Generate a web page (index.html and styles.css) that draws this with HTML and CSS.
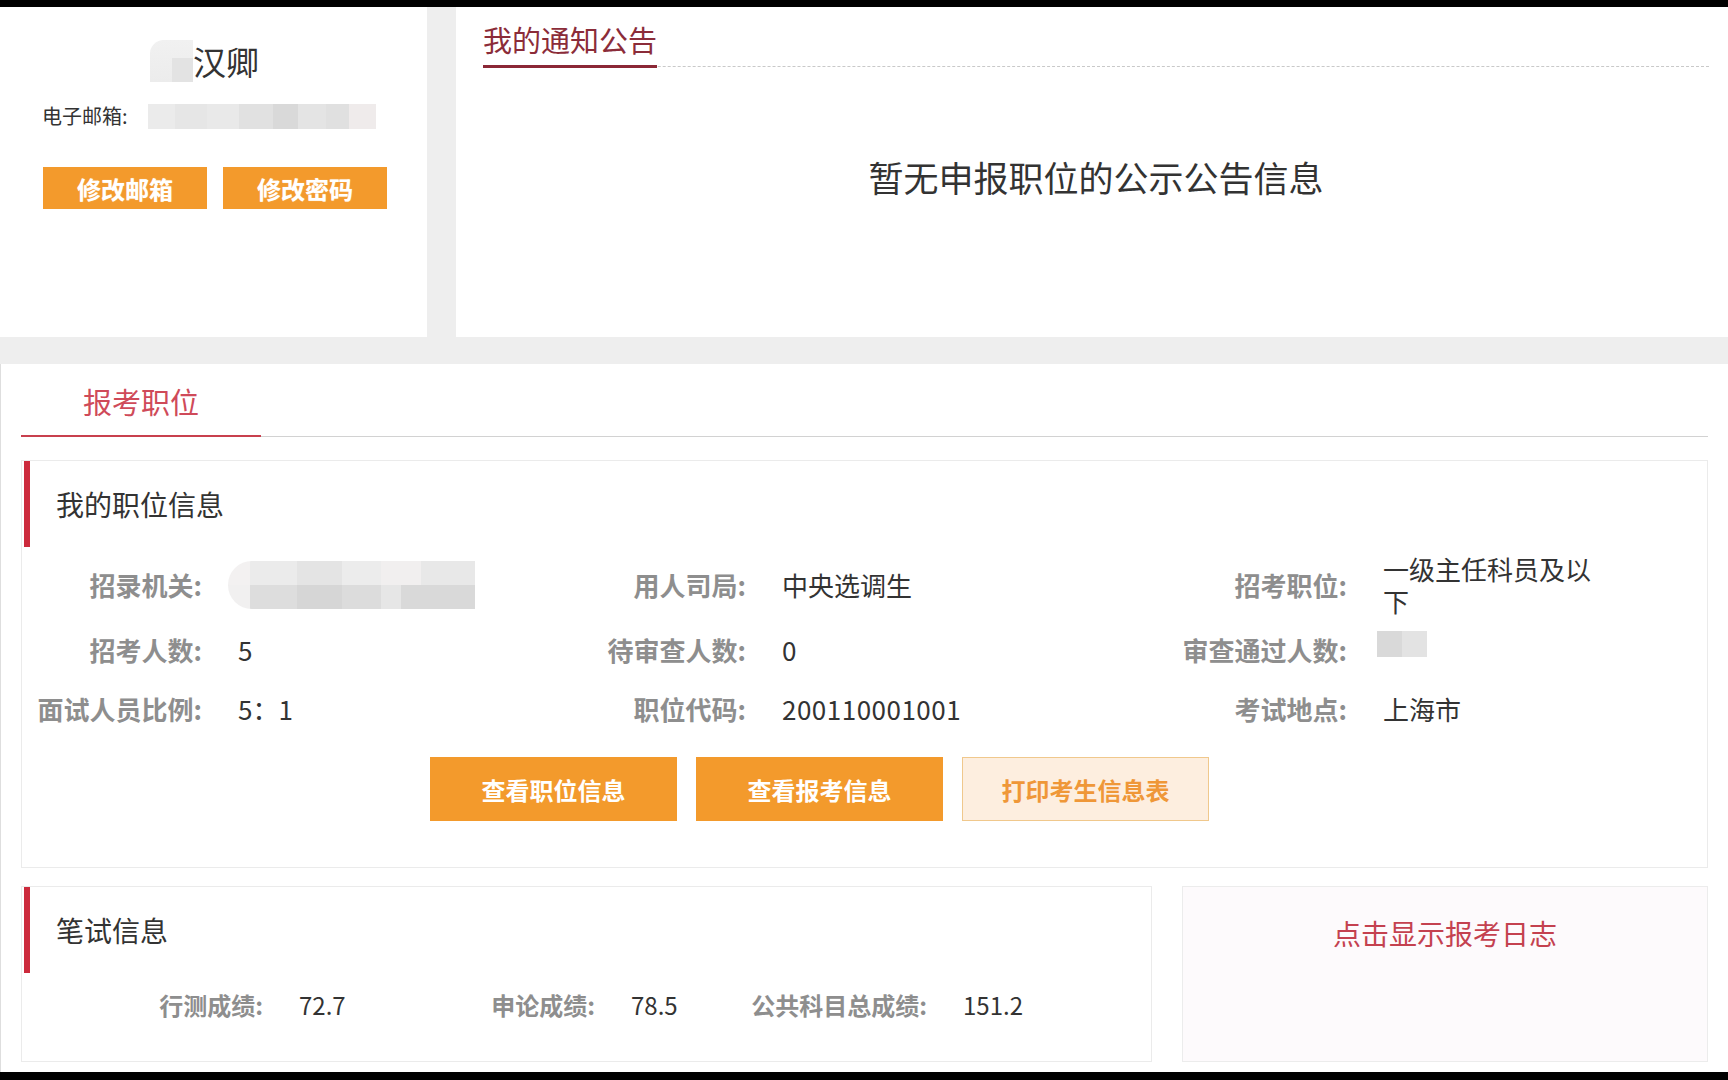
FILE: index.html
```html
<!DOCTYPE html>
<html lang="zh-CN">
<head>
<meta charset="utf-8">
<title>报考职位</title>
<link rel="stylesheet" href="styles.css">
</head>
<body>
<div class="screen">
  <div class="page">
    <div class="top">
      <section class="user">
        <div class="name"><span class="blur-name"></span><span class="name-text">汉卿</span></div>
        <div class="email"><span class="email-label">电子邮箱:</span><span class="blur-email"></span></div>
        <div class="user-btns">
          <button class="btn-small">修改邮箱</button>
          <button class="btn-small">修改密码</button>
        </div>
      </section>
      <section class="notice">
        <div class="notice-head"><span class="notice-title">我的通知公告</span></div>
        <p class="notice-empty">暂无申报职位的公示公告信息</p>
      </section>
    </div>

    <main class="main">
      <div class="tabs"><span class="tab">报考职位</span></div>

      <section class="card pos-card">
        <div class="card-head">我的职位信息</div>
        <div class="info-grid">
          <div class="lbl">招录机关:</div>
          <div class="val"><span class="blur-org"></span></div>
          <div class="lbl">用人司局:</div>
          <div class="val">中央选调生</div>
          <div class="lbl">招考职位:</div>
          <div class="val">一级主任科员及以下</div>

          <div class="lbl">招考人数:</div>
          <div class="val">5</div>
          <div class="lbl">待审查人数:</div>
          <div class="val">0</div>
          <div class="lbl">审查通过人数:</div>
          <div class="val"><span class="blur-num"></span></div>

          <div class="lbl">面试人员比例:</div>
          <div class="val">5：1</div>
          <div class="lbl">职位代码:</div>
          <div class="val num">200110001001</div>
          <div class="lbl">考试地点:</div>
          <div class="val">上海市</div>
        </div>
        <div class="pos-btns">
          <button class="btn-big">查看职位信息</button>
          <button class="btn-big">查看报考信息</button>
          <button class="btn-big btn-light">打印考生信息表</button>
        </div>
      </section>

      <div class="bottom-row">
        <section class="card score-card">
          <div class="card-head">笔试信息</div>
          <div class="scores">
            <div class="score"><span class="s-lbl">行测成绩:</span><span class="s-val">72.7</span></div>
            <div class="score"><span class="s-lbl">申论成绩:</span><span class="s-val">78.5</span></div>
            <div class="score"><span class="s-lbl">公共科目总成绩:</span><span class="s-val">151.2</span></div>
          </div>
        </section>
        <section class="log-card">
          <span class="log-link">点击显示报考日志</span>
        </section>
      </div>
    </main>
  </div>
</div>
</body>
</html>
```

FILE: styles.css
```css
* { box-sizing: border-box; }
html, body { margin: 0; padding: 0; }
body {
  background: #000;
  font-family: "Noto Sans CJK SC", "Noto Sans", sans-serif;
  color: #333;
}
button { font-family: inherit; cursor: pointer; }

.screen {
  width: 1728px;
  height: 1080px;
  padding-top: 7px;
  background: #000;
  overflow: hidden;
}
.page {
  height: 1065px;
  background: #eeeeee;
  overflow: hidden;
}

/* ---------- top row ---------- */
.top {
  display: flex;
  gap: 29px;
  height: 330px;
}
.user {
  width: 427px;
  background: #fff;
  padding-top: 34px;
}
.name {
  display: flex;
  align-items: center;
  padding-left: 150px;
  height: 40px;
}
.blur-name {
  width: 43px;
  height: 42px;
  border-radius: 14px 0 0 0;
  background:
    linear-gradient(#e3e3e3, #e3e3e3) 22px 18px / 21px 24px no-repeat,
    linear-gradient(#f1f1f1, #ececec);
}
.name-text {
  font-size: 33px;
  line-height: 40px;
  color: #333;
}
.email {
  display: flex;
  align-items: center;
  margin-top: 22px;
  padding-left: 42px;
  height: 26px;
}
.email-label {
  font-size: 20px;
  line-height: 26px;
  color: #333;
  width: 106px;
}
.blur-email {
  width: 228px;
  height: 25px;
  background: linear-gradient(to right,
    #ebebeb 0 12%, #e6e6e6 12% 26%, #e9e9e9 26% 40%, #e1e1e1 40% 55%,
    #d9d9d9 55% 66%, #e4e4e4 66% 78%, #e0e0e0 78% 88%, #efebeb 88%);
}
.user-btns {
  display: flex;
  gap: 16px;
  margin-top: 38px;
  padding-left: 43px;
}
.btn-small {
  width: 164px;
  height: 42px;
  border: none;
  background: #f39a2c;
  color: #fff;
  font-size: 24px;
  font-weight: 700;
  padding: 0;
  text-shadow: 0 0 1px rgba(255,255,255,.6);
}

.notice {
  flex: 1;
  background: #fff;
  padding: 12px 19px 0 27px;
}
.notice-head {
  display: flex;
  border-bottom: 1px dashed #c9c9c9;
}
.notice-title {
  font-size: 29px;
  line-height: 40px;
  padding-bottom: 6px;
  color: #8b2c39;
  border-bottom: 3px solid #8b2836;
  margin-bottom: -2px;
}
.notice-empty {
  margin: 86px 0 0;
  text-align: center;
  font-size: 35px;
  line-height: 48px;
  color: #333;
}

/* ---------- main ---------- */
.main {
  margin-top: 27px;
  height: 708px;
  background: #fff;
  border-left: 1px solid #dedede;
  padding: 17px 20px 0 20px;
}
.tabs {
  display: flex;
  border-bottom: 1px solid #d2d2d2;
}
.tab {
  width: 240px;
  text-align: center;
  font-size: 29px;
  line-height: 40px;
  padding-bottom: 14px;
  color: #cf4a59;
  border-bottom: 2px solid #c8404e;
  margin-bottom: -1px;
}

.card {
  border: 1px solid #ebebeb;
  background: #fff;
}
.pos-card {
  margin-top: 23px;
  height: 408px;
}
.card-head {
  margin-left: 2px;
  height: 86px;
  border-left: 6px solid #cc2a3c;
  padding-left: 26px;
  display: flex;
  align-items: center;
  font-size: 28px;
  color: #333;
}

.info-grid {
  display: grid;
  grid-template-columns: 180px 378px 166px 419px 182px 256px;
  grid-template-rows: 70px 60px 58px;
  align-items: center;
  margin-top: 3px;
  font-size: 26px;
  line-height: 32px;
}
.lbl {
  text-align: right;
  font-weight: 700;
  color: #8e8e8e;
  white-space: nowrap;
}
.val {
  padding-left: 36px;
  color: #333;
}
.val.num { letter-spacing: 0.5px; }
.blur-org {
  display: block;
  margin-left: -10px;
  width: 247px;
  height: 48px;
  border-radius: 24px 0 0 24px;
  background:
    linear-gradient(to right, #f3f1f1 0 9%, #ebebeb 9% 28%, #e4e4e4 28% 46%, #ececec 46% 62%, #f1efef 62% 78%, #e8e8e8 78%) top / 100% 50% no-repeat,
    linear-gradient(to right, #f1f0f0 0 9%, #dddddd 9% 28%, #d6d6d6 28% 46%, #dcdcdc 46% 62%, #e6e6e6 62% 70%, #d9d9d9 70%) bottom / 100% 50% no-repeat;
}
.blur-num {
  display: block;
  margin-left: -6px;
  margin-top: -12px;
  width: 50px;
  height: 26px;
  background: linear-gradient(to right, #d9d9d9 0 50%, #e3e3e3 50%);
}

.pos-btns {
  display: flex;
  gap: 19px;
  margin-top: 19px;
  padding-left: 408px;
}
.btn-big {
  width: 247px;
  height: 64px;
  border: 1px solid #f39a2c;
  background: #f39a2c;
  color: #fff;
  font-size: 24px;
  font-weight: 700;
  padding: 0;
}
.btn-light {
  background: #fdeedf;
  border-color: #f0c88c;
  color: #ef9738;
}

.bottom-row {
  display: flex;
  gap: 30px;
  margin-top: 18px;
}
.score-card {
  width: 1131px;
  height: 176px;
}
.scores {
  display: grid;
  grid-template-columns: 332px 332px 332px;
  padding-left: 21px;
  margin-top: 16px;
  font-size: 24px;
  line-height: 32px;
}
.score { display: flex; }
.s-lbl {
  width: 220px;
  text-align: right;
  font-weight: 700;
  color: #8e8e8e;
  white-space: nowrap;
}
.s-val {
  padding-left: 36px;
  color: #333;
}
.log-card {
  flex: 1;
  height: 176px;
  border: 1px solid #ececec;
  background: #fdfafc;
  text-align: center;
  padding-top: 26px;
}
.log-link {
  font-size: 28px;
  line-height: 40px;
  color: #c4414f;
  cursor: pointer;
}
```
